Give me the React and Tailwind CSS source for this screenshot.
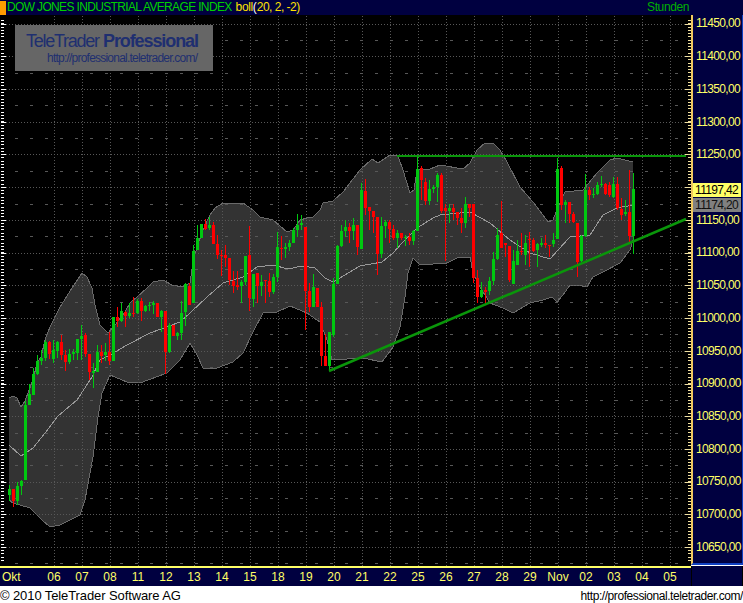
const font = { fontFamily: '"Liberation Sans", Arial, sans-serif' };

// [colour, body top, body bottom, wick top, wick bottom]; one candle every 4px from x=8
const candles = [
  ["g",489,495,485,501],["r",489,501,489,507],["g",486,501,482,505],["g",481,486,480,495],["g",405,480,401,480],
  ["g",394,405,384,405],["g",374,395,368,395],["g",361,374,355,375],["g",358,361,350,365],["g",342,358,340,361],
  ["r",342,354,341,359],["g",350,359,340,363],["g",342,351,341,358],["r",342,355,335,360],["r",355,362,350,371],
  ["g",354,362,349,364],["g",352,354,349,360],["g",339,353,339,360],["g",336,339,325,360],["r",335,354,333,357],
  ["r",354,372,354,380],["g",371,373,363,388],["g",352,372,345,372],["r",352,356,345,363],["g",352,355,343,361],
  ["r",352,361,332,365],["g",317,361,317,361],["r",317,321,307,327],["g",311,321,303,322],["r",312,316,311,327],
  ["g",313,316,303,318],["r",313,314,297,317],["g",301,313,299,314],["r",301,311,298,321],["g",306,311,305,312],
  ["g",305,306,302,311],["g",303,305,301,314],["r",303,317,303,317],["g",311,317,310,332],["r",311,352,311,374],
  ["g",325,352,323,353],["r",325,336,325,336],["g",333,336,332,340],["g",313,333,301,340],["g",284,312,283,326],
  ["r",286,305,283,305],["g",251,303,245,303],["g",238,250,225,250],["g",224,238,224,238],["r",224,229,219,230],
  ["g",225,228,217,230],["r",225,244,222,244],["r",244,255,235,259],["r",255,256,250,276],["r",255,258,245,267],
  ["r",258,280,258,285],["r",281,286,271,293],["r",285,287,271,290],["g",282,286,280,303],["g",256,282,256,285],
  ["r",255,298,226,311],["g",274,299,274,307],["r",273,286,273,303],["g",282,286,275,296],["r",280,281,280,303],
  ["r",281,292,273,297],["g",277,292,274,294],["g",247,277,232,282],["r",248,249,236,260],["g",247,249,243,258],
  ["g",243,247,240,251],["g",230,243,228,243],["g",225,230,214,237],["g",223,225,215,230],["r",227,291,227,330],
  ["r",291,307,283,312],["g",287,307,274,307],["r",288,307,288,307],["r",307,356,302,366],["r",356,366,334,366],
  ["g",332,366,332,370],["g",284,335,278,337],["g",246,284,245,284],["g",231,246,225,247],["g",227,231,220,237],
  ["r",227,231,223,243],["g",225,231,218,240],["r",225,247,225,255],["g",190,249,183,249],["r",191,208,179,215],
  ["r",207,211,207,230],["r",211,217,211,233],["r",217,254,217,275],["g",226,254,217,258],["g",222,226,220,238],
  ["r",222,229,220,243],["r",229,238,225,240],["g",233,238,230,248],["r",233,238,233,240],["g",237,238,235,246],
  ["r",237,241,233,245],["g",231,241,230,245],["g",169,231,156,231],["r",168,180,166,200],["r",182,201,178,205],
  ["g",189,201,180,205],["g",187,189,185,193],["g",175,187,173,202],["r",175,211,173,213],["r",208,211,204,261],
  ["g",208,211,204,223],["r",208,212,204,220],["r",212,218,212,225],["r",218,223,208,233],["g",204,223,197,228],
  ["r",204,208,204,217],["r",204,278,204,283],["r",278,297,270,303],["g",290,297,282,298],["r",290,292,287,305],
  ["g",281,291,277,295],["g",259,281,252,285],["g",235,259,228,260],["r",233,248,201,248],["r",243,245,243,257],
  ["r",246,280,246,282],["g",261,284,250,284],["g",251,265,240,265],["r",251,252,233,255],["g",243,255,235,265],
  ["r",239,240,232,267],["r",240,251,238,252],["g",244,250,243,267],["g",243,245,238,247],["r",243,245,235,248],
  ["r",245,246,245,257],["g",240,244,233,247],["g",169,239,158,239],["r",168,205,166,210],["g",202,205,200,223],
  ["r",202,214,202,223],["r",214,222,212,223],["r",223,262,223,277],["g",236,261,235,262],["g",190,236,174,237],
  ["r",190,195,187,200],["g",194,195,188,198],["g",185,194,182,195],["g",184,185,176,187],["r",184,194,183,195],
  ["r",185,195,182,197],["g",184,197,177,198],["r",184,208,177,210],["r",209,215,198,220],["g",212,214,200,216],
  ["r",212,236,170,242],["g",189,236,173,254],
];

const upper = "9,398 13,396 17,398 21,407 25,401 29,390 33,380 37,363 41,357 45,340 50,327 60,307 72,288 82,273 87,277 92,288 95,305 100,325 108,333 115,325 125,312 130,303 137,297 147,288 153,282 163,280 172,285 183,287 190,283 193,262 197,247 203,230 210,215 215,208 223,203 243,203 253,210 260,217 273,220 287,232 293,230 300,220 307,218 313,217 320,210 323,203 333,201 343,192 353,179 360,170 372,159 378,163 390,155 398,156 403,170 410,193 414,190 417,170 430,169 440,165 463,169 470,163 477,150 485,143 493,143 500,150 507,162 520,187 533,202 543,215 548,222 553,220 558,207 565,192 583,190 597,173 610,160 617,158 633,162";
const lower = "633,240 630,250 620,263 603,272 593,277 587,287 577,285 570,285 563,295 557,302 552,297 543,300 530,303 513,313 503,308 490,303 480,287 473,273 470,257 457,258 447,263 420,265 413,258 408,273 405,297 400,327 393,347 382,362 363,358 332,360 327,340 320,322 307,313 290,306 277,312 263,313 253,332 243,353 233,362 217,368 203,368 197,355 190,343 180,360 167,373 140,383 127,382 110,375 102,393 98,417 93,457 85,500 80,515 60,525 50,527 42,520 30,508 13,503 9,500";
const average = "9,445 21,456 33,448 45,433 58,416 77,400 92,377 100,360 110,355 127,345 150,333 180,322 190,313 207,297 223,283 243,277 257,267 273,265 288,269 302,266 315,268 325,278 333,282 360,266 382,262 393,253 402,243 417,228 433,218 440,215 470,212 490,223 510,240 530,253 550,259 558,250 570,237 590,235 603,215 617,208 633,205";

const prices = ["11450,00","11400,00","11350,00","11300,00","11250,00","11200,00","11150,00","11100,00","11050,00","11000,00","10950,00","10900,00","10850,00","10800,00","10750,00","10700,00","10650,00"];
const days = ["06","07","08","11","12","13","14","15","18","19","20","21","22","25","26","27","28","29","Nov","02","03","04","05"];

const gridY = prices.map((_, i) => 23.5 + i * 32.73);
const ticks = Array.from({ length: 166 }, (_, i) => 20 + i * 3.273);

const Chart = () => (
  <svg viewBox="0 15 691 551" className="block w-[691px] h-[551px] bg-black" shapeRendering="crispEdges">
    <polygon points={`${upper} ${lower}`} fill="#333333" />
    <polyline points={upper} fill="none" stroke="#6a6a6a" />
    <polyline points={lower} fill="none" stroke="#6a6a6a" />

    {/* grid */}
    {gridY.map((y) => (
      <g key={y}>
        <line x1="6" x2="688" y1={Math.round(y)} y2={Math.round(y)} stroke="#585858" strokeDasharray="1 2" />
        {y < 540 && (
          <line x1="15" x2="688" y1={Math.round(y + 16.4)} y2={Math.round(y + 16.4)} stroke="#585858" strokeDasharray="3 12" />
        )}
      </g>
    ))}
    <line x1="15" x2="688" y1="563" y2="563" stroke="#585858" strokeDasharray="3 12" />
    {days.map((_, i) => (
      <line key={i} x1={54.5 + i * 28} x2={54.5 + i * 28} y1="16" y2="566" stroke="#585858" strokeDasharray="1 2" />
    ))}

    {/* logo */}
    <rect x="15" y="25" width="198" height="46" fill="#666666" />
    <text x="26" y="47" fontSize="18" fill="#1f2f70" style={font} textLength="74">TeleTrader</text>
    <text x="103" y="47" fontSize="18" fontWeight="700" fill="#1f2f70" style={font} textLength="96">Professional</text>
    <text x="47" y="62" fontSize="12" fill="#1f2f70" style={font} textLength="151">http://professional.teletrader.com/</text>

    {/* side ticks */}
    {ticks.map((y) => (
      <g key={y} fill="#ffffff">
        <rect x="1" y={Math.round(y)} width="3" height="1" />
        <rect x="688" y={Math.round(y)} width="3" height="1" fill="#f0e0a0" />
      </g>
    ))}
    {gridY.map((y) => (
      <g key={y} fill="#ffffff">
        <rect x="1" y={Math.round(y)} width="5" height="1" />
        <rect x="685" y={Math.round(y)} width="6" height="1" fill="#f0e0a0" />
      </g>
    ))}

    <polyline points={average} fill="none" stroke="#999999" />

    {candles.map(([c, top, bottom, wickTop, wickBottom], i) => {
      const fill = c === "g" ? "#00c810" : "#ff0000";
      return (
        <g key={i} fill={fill}>
          <rect x={9 + i * 4} y={wickTop} width="1" height={wickBottom - wickTop} />
          <rect x={8 + i * 4} y={top} width="3" height={Math.max(bottom - top, 1)} />
        </g>
      );
    })}

    {/* trend lines */}
    <line x1="397" y1="156" x2="686" y2="156" stroke="#0a960a" strokeWidth="2" />
    <line x1="329" y1="371" x2="686" y2="219" stroke="#0a960a" strokeWidth="2.5" shapeRendering="auto" />
  </svg>
);

const App = () => {
  return (
    <div className="w-[743px] h-[603px] bg-white flex flex-col overflow-hidden" style={font}>
      {/* title bar */}
      <div className="h-[15px] bg-[#000040] flex items-center text-[12px] leading-[15px] whitespace-nowrap">
        <div className="w-[6px] h-[14px] bg-[#ff9c00] mr-[1px]" />
        <span className="text-[#00d000] tracking-[-0.65px]">DOW JONES INDUSTRIAL AVERAGE INDEX</span>
        <span className="text-[#ffe000] ml-[4px] tracking-[-0.4px]">boll</span>
        <span className="text-white">(</span>
        <span className="text-[#ffe000] tracking-[-0.5px]">20, 2, -2)</span>
        <span className="ml-auto mr-[54px] text-[#00b000] tracking-[-0.4px]">Stunden</span>
      </div>

      {/* chart + price scale */}
      <div className="flex h-[551px]">
        <Chart />
        <div className="relative w-[52px] h-[550px] bg-[#000040] border-l-2 border-l-[#f0c860] border-b-2 border-b-[#1040c0] border-r border-r-[#1040c0] overflow-hidden">
          <div className="-mt-[8px] flex flex-col">
            {prices.map((p) => (
              <div key={p} className="h-[32.73px] flex items-center pl-[3px] text-[12px] text-[#ffff66] tracking-[-0.65px]">
                {p !== "11200,00" && p}
              </div>
            ))}
          </div>
          <div className="absolute left-0 top-[168px] w-[48px] h-[14px] bg-[#ffff66] text-black text-[12px] leading-[14px] pl-[2px] tracking-[-0.65px]">
            11197,42
          </div>
          <div className="absolute left-0 top-[183px] w-[48px] h-[14px] bg-[#808080] text-[#101010] text-[12px] leading-[14px] pl-[2px] tracking-[-0.65px]">
            11174,20
          </div>
        </div>
      </div>

      {/* date scale */}
      <div className="h-[20px] flex bg-black">
        <div className="w-[691px] bg-[#000040] border-t-2 border-t-[#ffff66] flex items-center text-[12px] text-[#ffff66] whitespace-nowrap">
          <span className="w-[40px] pl-[2px]">Okt</span>
          {days.map((d) => (
            <span key={d} className="w-[28px] text-center shrink-0">{d}</span>
          ))}
        </div>
        <div className="ml-[1px] w-[50px] bg-[#000040]" />
      </div>

      {/* footer */}
      <div className="flex-1 flex items-center justify-between text-black whitespace-nowrap">
        <span className="text-[13px] tracking-[-0.1px]">© 2010 TeleTrader Software AG</span>
        <span className="text-[12px] tracking-[-0.43px]">http://professional.teletrader.com/</span>
      </div>
    </div>
  );
};

export default App;
